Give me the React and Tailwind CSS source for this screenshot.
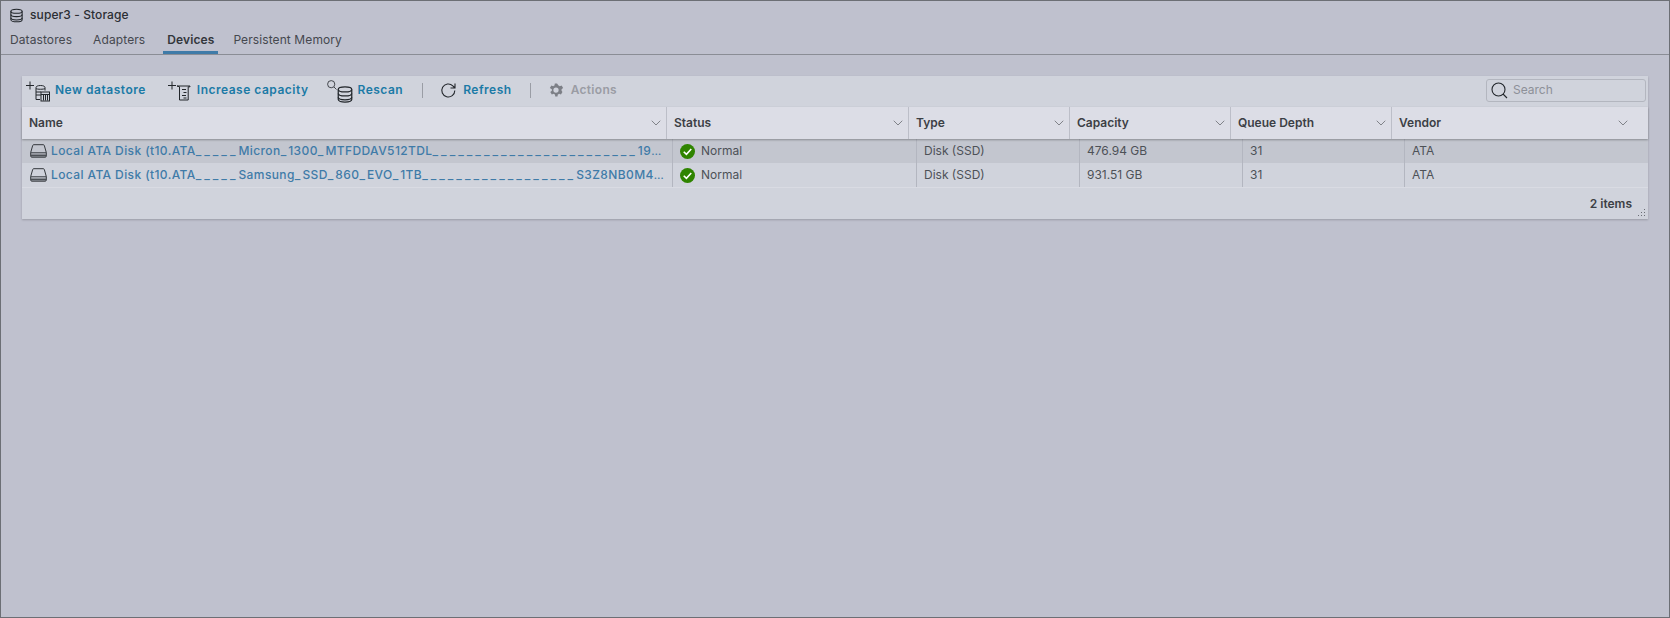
import { ChevronDown } from 'lucide-react';

const columns = [
  { label: 'Name', w: 'w-[644px] pr-[2px]' },
  { label: 'Status', w: 'w-[242px] pr-[2px]' },
  { label: 'Type', w: 'w-[161px] pr-[2px]' },
  { label: 'Capacity', w: 'w-[161px] pr-[2px]' },
  { label: 'Queue Depth', w: 'w-[161px] pr-[2px]' },
  { label: 'Vendor', w: 'flex-1 pr-[17px]' },
];

const rows = [
  {
    name: 'Local ATA Disk (t10.ATA_____Micron_1300_MTFDDAV512TDL________________________19',
    capacity: '476.94 GB',
    bg: 'bg-[#c3c6cf]',
  },
  {
    name: 'Local ATA Disk (t10.ATA_____Samsung_SSD_860_EVO_1TB__________________S3Z8NB0M4',
    capacity: '931.51 GB',
    bg: '',
  },
];

function Db({ className }) {
  return (
    <svg className={className} viewBox="0 0 16 16" fill="none" stroke="#22262b" strokeWidth="1.1">
      <path d="M2 3.5c0-1.3 2.7-2.2 6-2.2s6 .9 6 2.2v9c0 1.3-2.7 2.2-6 2.2s-6-.9-6-2.2z" />
      <path d="M2 3.5c0 1.3 2.7 2.2 6 2.2s6-.9 6-2.2M2 7c0 1.3 2.7 2.2 6 2.2S14 8.300 14 7M2 10.500c0 1.300 2.700 2.200 6 2.200s6-.9 6-2.200" />
    </svg>
  );
}

function NewDatastoreIcon() {
  return (
    <svg className="w-[26px] h-[24px] shrink-0 mt-[3px] mr-[1px]" viewBox="0 0 26 24" fill="none" stroke="#22262b" strokeWidth="1">
      <path d="M1 5.500h8M5 1.500v8" />
      <path d="M11 19.500v-12c0-1 1.500-2 4.500-2s4.500 1 4.500 2v3M11 8.500c1 1 8 1 9 0" />
      <path d="M11 12h5M11 15h5M11 19.500h4" />
      <rect x="16" y="12" width="8.500" height="9" />
      <path d="M16 14.500h8.500M18.500 15v5.500M20.500 15v5.500M22.500 15v5.500" />
    </svg>
  );
}

function IncreaseIcon() {
  return (
    <svg className="w-[24px] h-[24px] shrink-0 mt-[3px] mr-[3px]" viewBox="0 0 24 24" fill="none" stroke="#22262b" strokeWidth="1">
      <path d="M1 5.500h8M5 1.500v8" />
      <path d="M10 6h13v.8h-1.800V20H12.500V6.800L10 6z" />
      <path d="M15 9.500h4M16.500 12.500h3M15 15.500h4M16.500 18h3" strokeWidth="1.200" />
    </svg>
  );
}

function RescanIcon() {
  return (
    <div className="relative w-[27px] h-[24px] shrink-0 mt-[3px]">
      <svg className="absolute left-0 top-0 w-[10px] h-[10px]" viewBox="0 0 10 10" fill="none" stroke="#33373c" strokeWidth="0.900">
        <circle cx="4.200" cy="4.200" r="3.600" />
        <path d="M7 7l2.500 2.500" />
      </svg>
      <Db className="absolute left-[9px] top-[5px] w-[18px] h-[19px]" />
    </div>
  );
}

function DiskIcon() {
  return (
    <svg className="w-[17px] h-[14px] shrink-0" viewBox="0 0 17 14" fill="none" stroke="#33373c" strokeWidth="1">
      <path d="M.7 8.500 2.700 1.500a1 1 0 0 1 1-.8h9.600a1 1 0 0 1 1 .8l2 7v3.500a1.200 1.200 0 0 1-1.200 1.200H1.900A1.200 1.200 0 0 1 .7 12z" />
      <path d="M.7 8.800h15.600" />
      <path d="M1 10.500h15v2H1z" fill="#4c5056" stroke="none" />
    </svg>
  );
}

function StatusIcon() {
  return (
    <svg className="w-[15px] h-[15px] shrink-0" viewBox="0 0 14 14">
      <circle cx="7" cy="7" r="7" fill="#2f8400" />
      <path d="M3.500 7.200 6 9.700l4.500-5" fill="none" stroke="#fff" strokeWidth="1.500" />
    </svg>
  );
}

function ToolbarButton({ icon, label, className = '' }) {
  return (
    <div className={`flex items-center gap-[3px] ${className}`}>
      {icon}
      <span className="text-[12px] font-semibold tracking-[0.5px] text-[#1b7aa6] whitespace-nowrap">{label}</span>
    </div>
  );
}

function Cell({ children, className = '' }) {
  return (
    <div className={`flex items-center h-full border-l border-[#b3b6c0] pl-[7px] text-[12px] text-[#4d5157] ${className}`}>
      {children}
    </div>
  );
}

// underscores are wider in the original font
function DiskName({ name }) {
  return (
    <span className="whitespace-nowrap text-[12px] font-medium tracking-[0.4px] text-[#3f7ba8]">
      {name.split(/(_+)/).map((part, i) =>
        part.startsWith('_')
          ? <span key={i} className={part.length > 1 ? 'tracking-[3px]' : 'tracking-[2px]'}>{part}</span>
          : part
      )}
      <span className="text-[11px] tracking-[-0.4px]">…</span>
    </span>
  );
}

export default function App() {
  return (
    <div
      className="h-[618px] w-[1670px] border border-[#6c6f75] bg-[#bfc1ce] overflow-hidden text-[#33363b]"
      style={{ fontFamily: '"Inter", "Liberation Sans", sans-serif' }}
    >
      {/* Title */}
      <div className="flex items-center gap-[6px] h-[27px] pl-[8px] pt-[1px]">
        <Db className="w-[15px] h-[15px]" />
        <span className="text-[12px] font-medium tracking-[0.1px] text-[#2b2e33]">super3 - Storage</span>
      </div>

      {/* Tabs */}
      <div className="flex items-end h-[27px] border-b border-[#8a8d95] pl-[9px] text-[12px] tracking-[0.1px] text-[#45484e]">
        <div className="h-full flex items-center border-b-[3px] border-transparent mr-[21px]">Datastores</div>
        <div className="h-full flex items-center border-b-[3px] border-transparent mr-[18px]">Adapters</div>
        <div className="h-full flex items-center px-[4px] mr-[15px] border-b-[3px] border-[#3f7ba8] font-semibold text-[#33363b]">Devices</div>
        <div className="h-full flex items-center border-b-[3px] border-transparent">Persistent Memory</div>
      </div>

      {/* Card */}
      <div className="ml-[21px] mr-[21px] mt-[21px] h-[143px] bg-[#d0d3dc] shadow-[0_1px_2px_rgba(0,0,0,0.2)] flex flex-col relative">
        {/* Toolbar */}
        <div className="flex items-center h-[31px] pl-[3px] pr-[2px] pb-[3px] shrink-0">
          <ToolbarButton icon={<NewDatastoreIcon />} label="New datastore" className="mr-[21px]" />
          <ToolbarButton icon={<IncreaseIcon />} label="Increase capacity" className="mr-[19px]" />
          <ToolbarButton icon={<RescanIcon />} label="Rescan" />
          <div className="w-px h-[15px] bg-[#9a9da5] ml-[19px] mr-[17px]" />
          <ToolbarButton icon={<svg className="w-[17px] h-[17px] mr-[3px]" viewBox="0 0 17 17" fill="none" stroke="#22262b" strokeWidth="1.100"><path d="M14.800 8.500a6.500 6.500 0 1 1-2-4.700L15 6M15 1.500V6h-4.500" /></svg>} label="Refresh" />
          <div className="w-px h-[15px] bg-[#9a9da5] ml-[18px] mr-[16px]" />
          <ToolbarButton
            icon={
              <svg className="w-[18px] h-[18px] mr-[3px]" viewBox="0 0 24 24" fill="#7c7f86">
                <path d="M19.400 13a7.500 7.500 0 0 0 0-2l2.100-1.600-2-3.500-2.500 1a7.500 7.500 0 0 0-1.700-1L13.400 3.300h-3l-.4 2.600a7.500 7.500 0 0 0-1.700 1l-2.500-1-2 3.500L6.500 11a7.500 7.500 0 0 0 0 2l-2.100 1.600 2 3.500 2.500-1a7.500 7.500 0 0 0 1.700 1l.4 2.600h3l.4-2.600a7.500 7.500 0 0 0 1.700-1l2.500 1 2-3.500zM12 15.500a3.500 3.500 0 1 1 0-7 3.500 3.500 0 0 1 0 7z" fillRule="evenodd" />
              </svg>
            }
            label={<span className="text-[#9a9ca4] tracking-[0.3px]">Actions</span>}
          />
          <div className="ml-auto w-[160px] h-[23px] border border-[#b3b6bf] rounded-[3px] flex items-center pl-[4px] gap-[5px]">
            <svg className="w-[17px] h-[17px]" viewBox="0 0 17 17" fill="none" stroke="#22262b" strokeWidth="1.100">
              <circle cx="7.500" cy="7.500" r="6.500" />
              <path d="M12 12l4 4" />
            </svg>
            <span className="text-[12px] text-[#8d9098]">Search</span>
          </div>
        </div>

        {/* Header */}
        <div className="flex h-[32px] shrink-0 bg-[#dcdde6] shadow-[0_1px_2px_rgba(0,0,0,0.3)] relative">
          {columns.map((c, i) => (
            <div
              key={c.label}
              className={`${c.w} flex items-center justify-between pl-[7px] text-[12px] font-semibold text-[#3c3f45] ${i > 0 ? 'border-l border-[#bcbec8]' : ''}`}
            >
              <span>{c.label}</span>
              <ChevronDown className="w-[16px] h-[16px] text-[#5d6066]" strokeWidth={1.100} />
            </div>
          ))}
        </div>

        {/* Rows */}
        {rows.map((r) => (
          <div key={r.capacity} className={`grid grid-cols-[650px_244px_163px_163px_162px_1fr] h-[24px] shrink-0 ${r.bg}`}>
            <div className="flex items-center pl-[8px] gap-[4px] min-w-0">
              <DiskIcon />
              <DiskName name={r.name} />
            </div>
            <Cell className="gap-[6px]"><StatusIcon /><span>Normal</span></Cell>
            <Cell>Disk (SSD)</Cell>
            <Cell>{r.capacity}</Cell>
            <Cell>31</Cell>
            <Cell>ATA</Cell>
          </div>
        ))}

        {/* Footer */}
        <div className="flex-1 border-t border-[#d9dbe3] flex items-center justify-end pr-[16px] text-[12px] font-semibold text-[#3c3f45]">
          2 items
        </div>
        <svg className="absolute right-[2px] bottom-[2px] w-[8px] h-[8px]" viewBox="0 0 8 8" fill="#6b6e75">
          <rect x="6" y="0" width="1" height="1" />
          <rect x="3" y="3" width="1" height="1" />
          <rect x="6" y="3" width="1" height="1" />
          <rect x="0" y="6" width="1" height="1" />
          <rect x="3" y="6" width="1" height="1" />
          <rect x="6" y="6" width="1" height="1" />
        </svg>
      </div>
    </div>
  );
}
